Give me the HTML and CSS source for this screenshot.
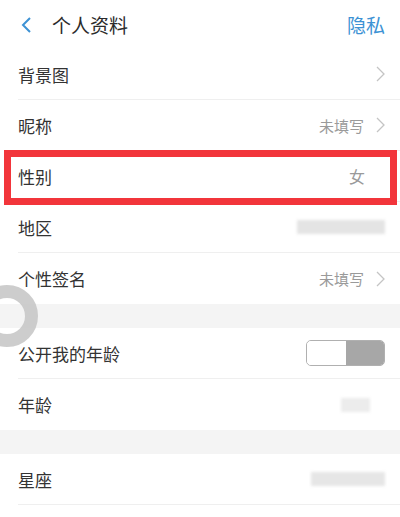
FILE: index.html
```html
<!DOCTYPE html>
<html lang="zh-CN">
<head>
<meta charset="utf-8">
<link rel="stylesheet" href="styles.css">
</head>
<body>
<div class="page">
  <header class="topbar">
    <svg class="back" width="12" height="16" viewBox="0 0 12 16"><polyline points="9,1 2,8 9,15" fill="none" stroke="#3d92d4" stroke-width="2"/></svg>
    <span class="title">个人资料</span>
    <span class="privacy">隐私</span>
  </header>

  <div class="row"><span class="label">背景图</span><span class="right"><svg class="chev" width="9" height="16" viewBox="0 0 9 16"><polyline points="1,1 8,8 1,15" fill="none" stroke="#c4c4c4" stroke-width="1.3"/></svg></span></div>
  <div class="row"><span class="label">昵称</span><span class="right"><span class="value">未填写</span><svg class="chev" width="9" height="16" viewBox="0 0 9 16"><polyline points="1,1 8,8 1,15" fill="none" stroke="#c4c4c4" stroke-width="1.3"/></svg></span></div>
  <div class="row highlight"><span class="label">性别</span><span class="right"><span class="value gender">女</span></span></div>
  <div class="row"><span class="label">地区</span><span class="right"><span class="blur wide"></span></span></div>
  <div class="row last"><span class="label">个性签名</span><span class="right"><span class="value">未填写</span><svg class="chev" width="9" height="16" viewBox="0 0 9 16"><polyline points="1,1 8,8 1,15" fill="none" stroke="#c4c4c4" stroke-width="1.3"/></svg></span></div>

  <div class="gap"></div>

  <div class="row"><span class="label">公开我的年龄</span><span class="right"><span class="toggle"><span class="knob"></span><span class="track"></span></span></span></div>
  <div class="row last"><span class="label">年龄</span><span class="right"><span class="blur small"></span></span></div>

  <div class="gap"></div>

  <div class="row"><span class="label">星座</span><span class="right"><span class="blur star"></span></span></div>

  <div class="spinner"></div>
</div>
</body>
</html>
```

FILE: styles.css
```css
html, body {
  margin: 0;
  padding: 0;
  background: #fff;
}
body {
  font-family: "Noto Sans CJK SC", "Noto Sans", sans-serif;
  color: #333;
}
.page {
  position: relative;
  width: 400px;
  height: 517px;
  overflow: hidden;
  background: #fff;
}
.topbar {
  height: 49px;
  display: flex;
  align-items: center;
  padding: 0 15px 0 21px;
  box-sizing: border-box;
}
.back {
  display: block;
  margin-top: 1px;
}
.title {
  margin-left: 19px;
  font-size: 19px;
  color: #2b2b2b;
}
.privacy {
  margin-left: auto;
  font-size: 19px;
  color: #3d92d4;
}
.row {
  position: relative;
  height: 51px;
  margin-left: 18px;
  padding-right: 15px;
  border-bottom: 1px solid #efefef;
  box-sizing: border-box;
  display: flex;
  align-items: center;
  justify-content: space-between;
}
.row.last {
  border-bottom: none;
}
.label {
  font-size: 17px;
  color: #333;
}
.right {
  display: flex;
  align-items: center;
  gap: 12px;
}
.value {
  font-size: 15px;
  color: #9a9a9a;
}
.value.gender {
  margin-right: 20px;
  font-size: 16px;
}
.chev {
  display: block;
}
.highlight::after {
  content: "";
  position: absolute;
  top: -1px;
  bottom: -4px;
  left: -14px;
  right: 3px;
  border: 7px solid #f2353b;
}
.gap {
  height: 24px;
  background: #f4f4f4;
}
.blur {
  display: block;
  height: 14px;
  background: #e4e4e4;
  filter: blur(1.5px);
}
.blur.wide {
  width: 88px;
}
.blur.small {
  width: 29px;
  background: #ececec;
  margin-right: 15px;
}
.blur.star {
  width: 74px;
  background: #e6e6e6;
}
.toggle {
  display: flex;
  width: 79px;
  height: 26px;
  border: 1px solid #b0b0b0;
  border-radius: 5px;
  overflow: hidden;
  box-sizing: border-box;
}
.knob {
  flex: 1;
  background: #fff;
  border-radius: 4px;
}
.track {
  flex: 1;
  background: #a7a7a7;
}
.spinner {
  position: absolute;
  left: -24px;
  top: 285px;
  width: 62px;
  height: 62px;
  box-sizing: border-box;
  border: 13px solid rgba(200, 200, 200, 0.9);
  border-radius: 50%;
}
```
